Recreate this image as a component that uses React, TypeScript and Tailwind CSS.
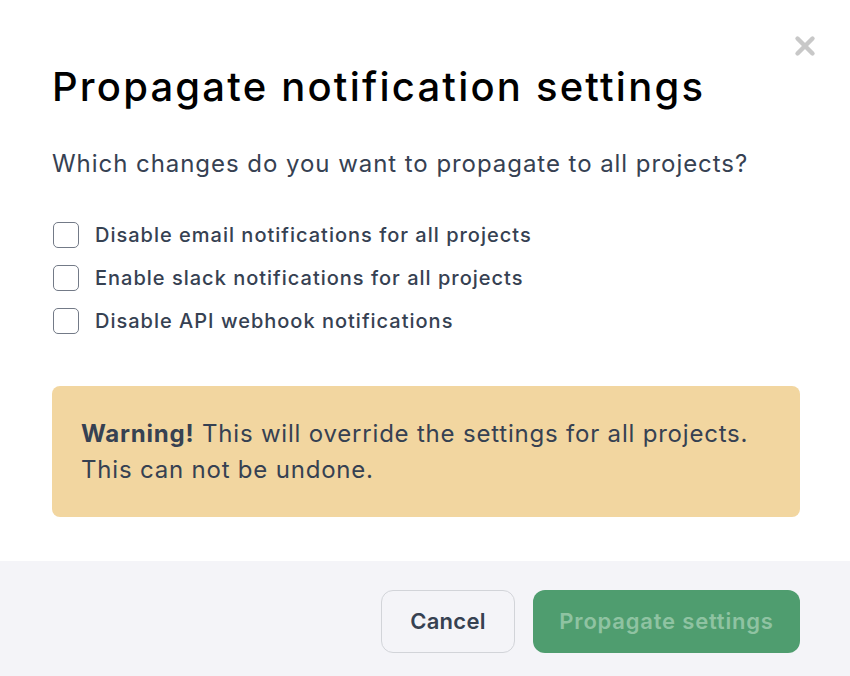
import { X } from 'lucide-react';

const options = [
  'Disable email notifications for all projects',
  'Enable slack notifications for all projects',
  'Disable API webhook notifications',
];

export default function App() {
  return (
    <div className="w-[850px] h-[676px] bg-white flex flex-col text-[#364152]" style={{ fontFamily: 'Inter, "Noto Sans", sans-serif' }}>
      <div className="relative flex-1 pl-[52px] pr-[50px] pt-[57px]">
        <button className="absolute right-[30px] top-[31px] text-[#c8c8c8]">
          <X className="w-[30px] h-[30px]" strokeWidth={3.5} />
        </button>
        <h1 className="text-[40px] leading-[60px] font-medium text-black tracking-[2.2px]">Propagate notification settings</h1>
        <p className="mt-[29px] text-[24px] leading-[36px] tracking-[0.95px]">Which changes do you want to propagate to all projects?</p>
        <div className="mt-[40px] flex flex-col gap-[17px]">
          {options.map(o => (
            <label key={o} className="flex items-center gap-[16px]">
              <span className="ml-px w-[26px] h-[26px] rounded-[5px] border-[1.5px] border-[#737a87] bg-white" />
              <span className="text-[20px] leading-[26px] font-medium tracking-[1px]">{o}</span>
            </label>
          ))}
        </div>
        <div className="mt-[52px] rounded-[8px] bg-[#f2d6a0] px-[29px] pt-[30px] pb-[29px] text-[24px] leading-[36px] tracking-[0.8px]">
          <strong className="font-bold">Warning!</strong> This will override the settings for all projects. This can not be undone.
        </div>
      </div>
      <div className="h-[115px] bg-[#f4f4f8] flex items-start justify-end gap-[18px] px-[50px] pt-[29px]">
        <button className="h-[63px] w-[134px] rounded-[12px] border border-[#d2d4d9] bg-[#f4f4f8] text-[22px] font-semibold text-[#364152] tracking-[0.3px]">Cancel</button>
        <button className="h-[63px] w-[267px] rounded-[12px] bg-[#4f9d6f] text-[22px] font-semibold text-[#8fc3a2] tracking-[0.8px]">Propagate settings</button>
      </div>
    </div>
  );
}
